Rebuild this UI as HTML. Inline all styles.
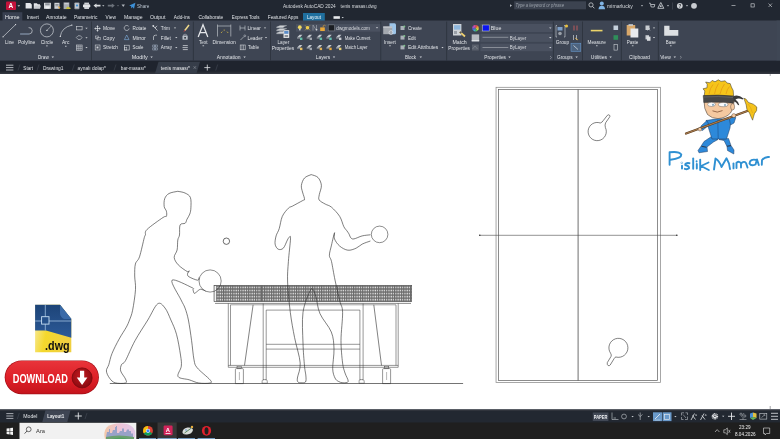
<!DOCTYPE html><html><head><meta charset="utf-8"><style>*{margin:0;padding:0}html,body{width:780px;height:439px;overflow:hidden;background:#fff}svg{display:block;will-change:transform}</style></head><body>
<svg width="780" height="439" viewBox="0 0 780 439" font-family="Liberation Sans">
<defs><pattern id="net" x="214" y="285.3" width="2.28" height="3.05" patternUnits="userSpaceOnUse"><rect width="2.28" height="3.05" fill="#e0e0e0"/><rect x="0" y="0" width="1.1" height="3.05" fill="#6a6a6a"/><rect x="0" y="0" width="2.28" height="1.3" fill="#6a6a6a"/></pattern><linearGradient id="btn" x1="0" y1="0" x2="0" y2="1"><stop offset="0" stop-color="#e8343a"/><stop offset="0.55" stop-color="#de1f27"/><stop offset="1" stop-color="#c5141c"/></linearGradient><radialGradient id="circ" cx="0.45" cy="0.4" r="0.6"><stop offset="0" stop-color="#c41a20"/><stop offset="1" stop-color="#8a0a10"/></radialGradient></defs>
<rect x="0" y="0" width="780" height="73.6" fill="#212731"/>
<rect x="6" y="1.6" width="10" height="8.4" rx="1" fill="#c3123b"/>
<text x="8.6" y="8.3" font-size="6.5" fill="#fff" font-weight="bold">A</text>
<path d="M17.45 5.19L20.15 5.19L18.80 6.68Z" fill="#c8ccd2"/>
<path d="M25.6 3H30.3L31.8 4.5V8.5H25.6Z" fill="#e4e6e9"/>
<path d="M33.8 3.2H36.8L37.8 4.2H40V8.5H33.8Z" fill="#e4e6e9"/><path d="M34.8 5.5H41L40 8.5H33.8Z" fill="#c9ccd0"/>
<rect x="44" y="2.8" width="6.899999999999999" height="6" fill="#d9dbde"/><rect x="45.2" y="3.3" width="4.499999999999998" height="2" fill="#8d939b"/><rect x="45.5" y="6.5" width="3.8999999999999986" height="2" fill="#eef0f2"/>
<rect x="54.4" y="2.8" width="5.100000000000001" height="6" fill="#d0d3d7"/><rect x="55.4" y="4" width="3.1000000000000014" height="0.7" fill="#6f757d"/><rect x="55.4" y="5.5" width="3.1000000000000014" height="0.7" fill="#6f757d"/><path d="M58.0 6L60.5 7.5L59.0 9Z" fill="#e0a33a"/>
<rect x="63.6" y="2.4" width="5.699999999999996" height="6.7" fill="#a8adb4"/><rect x="64.4" y="3.2" width="4.199999999999996" height="1" fill="#d0d4d8"/><path d="M65.6 9.1L67.6 6.5L70.8 8L70.3 9.1Z" fill="#c8c040"/>
<rect x="74.39999999999999" y="2.4" width="5.000000000000003" height="6.8" rx="0.8" fill="#9aa0a8"/><rect x="75.1" y="3.3" width="3.6000000000000028" height="4.6" fill="#c8ccd2"/><path d="M75.8 5.5L77.0 4L78.2 5.5L77.0 7Z" fill="#3d8fd4"/>
<rect x="83" y="4.2" width="7.299999999999997" height="3.3" rx="1.2" fill="#e2e4e7"/><rect x="84.3" y="2.6" width="4.6999999999999975" height="1.8" fill="#cfd2d6"/><rect x="84.3" y="7" width="4.6999999999999975" height="2" fill="#cfd2d6"/>
<path d="M93.5 5.6L96.5 3.4V4.8H100.5V6.6H96.5V8Z" fill="#d9dcdf"/>
<path d="M102.15 5.28L104.45 5.28L103.30 6.55Z" fill="#d0d4d9"/>
<path d="M114.8 5.6L111.8 3.4V4.8H107.8V6.6H111.8V8Z" fill="#6c727b"/>
<path d="M116.85 5.28L119.15 5.28L118.00 6.55Z" fill="#6c727b"/>
<path d="M121.5 4.4H125L123.25 7Z" fill="#aeb3ba"/>
<path d="M129.2 5.5L135.4 2.8L134 8.8L132.3 6.9L131 8.5L131.2 6.3Z" fill="#3c8fd6"/>
<text x="137.00" y="7.71" font-size="5.3" fill="#b9c4cf" font-weight="normal" font-style="normal" font-family="Liberation Sans" textLength="12.30" lengthAdjust="spacingAndGlyphs" >Share</text>
<text x="282.90" y="7.71" font-size="5.3" fill="#d8dbdf" font-weight="normal" font-style="normal" font-family="Liberation Sans" textLength="52.90" lengthAdjust="spacingAndGlyphs" >Autodesk AutoCAD 2024</text>
<text x="340.60" y="7.71" font-size="5.3" fill="#d8dbdf" font-weight="normal" font-style="normal" font-family="Liberation Sans" textLength="35.90" lengthAdjust="spacingAndGlyphs" >tenis masası.dwg</text>
<path d="M510 4.3L512 5.6L510 6.9Z" fill="#b6bbc2"/>
<rect x="514.2" y="1.3" width="71.8" height="8" fill="#3c4350"/>
<text x="515.50" y="7.16" font-size="4.6" fill="#9aa1aa" font-weight="normal" font-style="italic" font-family="Liberation Sans" textLength="48.50" lengthAdjust="spacingAndGlyphs" >Type a keyword or phrase</text>
<circle cx="591" cy="4.9" r="2.1" fill="none" stroke="#c5c9ce" stroke-width="0.8"/><path d="M592.5 6.4L594.4 8.3" stroke="#c5c9ce" stroke-width="0.9"/>
<circle cx="601.8" cy="3.6" r="2" fill="#80b4e4"/><path d="M598.5 9.2Q598.8 5.8 601.8 5.8Q604.8 5.8 605.1 9.2Z" fill="#80b4e4"/>
<text x="607.00" y="7.71" font-size="5.3" fill="#d8dbdf" font-weight="normal" font-style="normal" font-family="Liberation Sans" textLength="25.80" lengthAdjust="spacingAndGlyphs" >mimarlucky</text>
<path d="M640.85 5.28L643.15 5.28L642.00 6.55Z" fill="#d0d4d9"/>
<path d="M649 3.2H650.3L651.2 7H654.2L654.8 4.5H651" fill="none" stroke="#c5c9ce" stroke-width="0.8"/>
<path d="M660.8 2.5L663.8 8.3H657.8Z" fill="none" stroke="#c5c9ce" stroke-width="0.9"/><circle cx="660.8" cy="6.2" r="0.9" fill="#c5c9ce"/>
<path d="M666.85 5.28L669.15 5.28L668.00 6.55Z" fill="#d0d4d9"/>
<rect x="672" y="2.5" width="0.6" height="7" fill="#4a515b"/>
<circle cx="679.8" cy="5.8" r="2.9" fill="#d0d3d7"/><text x="678.4" y="7.8" font-size="4.5" fill="#1e2229" font-weight="bold">?</text>
<path d="M685.85 5.28L688.15 5.28L687.00 6.55Z" fill="#d0d4d9"/>
<circle cx="694" cy="5.8" r="2.9" fill="#c9ccd1"/>
<rect x="731.5" y="5.4" width="4" height="0.6" fill="#d9dcdf"/>
<rect x="751" y="3.8" width="3.2" height="3.2" fill="none" stroke="#d9dcdf" stroke-width="0.6"/>
<path d="M768.5 3.5L772 7M772 3.5L768.5 7" stroke="#d9dcdf" stroke-width="0.6"/>
<rect x="2.5" y="12.2" width="19.8" height="9" fill="#394050"/>
<rect x="303" y="13" width="21.8" height="8.2" fill="#1f6f9e"/>
<text x="5.00" y="19.01" font-size="5.3" fill="#eef0f2" font-weight="normal" font-style="normal" font-family="Liberation Sans" textLength="14.50" lengthAdjust="spacingAndGlyphs" >Home</text>
<text x="26.70" y="19.01" font-size="5.3" fill="#e0e3e7" font-weight="normal" font-style="normal" font-family="Liberation Sans" textLength="12.30" lengthAdjust="spacingAndGlyphs" >Insert</text>
<text x="46.00" y="19.01" font-size="5.3" fill="#e0e3e7" font-weight="normal" font-style="normal" font-family="Liberation Sans" textLength="20.70" lengthAdjust="spacingAndGlyphs" >Annotate</text>
<text x="74.00" y="19.01" font-size="5.3" fill="#e0e3e7" font-weight="normal" font-style="normal" font-family="Liberation Sans" textLength="23.40" lengthAdjust="spacingAndGlyphs" >Parametric</text>
<text x="105.60" y="19.01" font-size="5.3" fill="#e0e3e7" font-weight="normal" font-style="normal" font-family="Liberation Sans" textLength="10.30" lengthAdjust="spacingAndGlyphs" >View</text>
<text x="124.00" y="19.01" font-size="5.3" fill="#e0e3e7" font-weight="normal" font-style="normal" font-family="Liberation Sans" textLength="18.60" lengthAdjust="spacingAndGlyphs" >Manage</text>
<text x="149.90" y="19.01" font-size="5.3" fill="#e0e3e7" font-weight="normal" font-style="normal" font-family="Liberation Sans" textLength="15.50" lengthAdjust="spacingAndGlyphs" >Output</text>
<text x="173.80" y="19.01" font-size="5.3" fill="#e0e3e7" font-weight="normal" font-style="normal" font-family="Liberation Sans" textLength="16.20" lengthAdjust="spacingAndGlyphs" >Add-ins</text>
<text x="198.50" y="19.01" font-size="5.3" fill="#e0e3e7" font-weight="normal" font-style="normal" font-family="Liberation Sans" textLength="24.70" lengthAdjust="spacingAndGlyphs" >Collaborate</text>
<text x="231.70" y="19.01" font-size="5.3" fill="#e0e3e7" font-weight="normal" font-style="normal" font-family="Liberation Sans" textLength="27.90" lengthAdjust="spacingAndGlyphs" >Express Tools</text>
<text x="267.80" y="19.01" font-size="5.3" fill="#e0e3e7" font-weight="normal" font-style="normal" font-family="Liberation Sans" textLength="30.60" lengthAdjust="spacingAndGlyphs" >Featured Apps</text>
<text x="306.90" y="19.01" font-size="5.3" fill="#eef6fb" font-weight="normal" font-style="normal" font-family="Liberation Sans" textLength="14.10" lengthAdjust="spacingAndGlyphs" >Layout</text>
<rect x="333.5" y="16.2" width="6.4" height="2.6" fill="#e6e8eb"/>
<path d="M341.55 16.88L343.85 16.88L342.70 18.15Z" fill="#d0d4d9"/>
<rect x="0" y="20.5" width="780" height="40.3" fill="#3e4553"/>
<rect x="776.5" y="20.5" width="3.5" height="40.3" fill="#3f4755"/>
<rect x="91.00" y="21.5" width="0.8" height="39" fill="#2c323c"/>
<rect x="192.90" y="21.5" width="0.8" height="39" fill="#2c323c"/>
<rect x="270.10" y="21.5" width="0.8" height="39" fill="#2c323c"/>
<rect x="380.40" y="21.5" width="0.8" height="39" fill="#2c323c"/>
<rect x="446.30" y="21.5" width="0.8" height="39" fill="#2c323c"/>
<rect x="552.90" y="21.5" width="0.8" height="39" fill="#2c323c"/>
<rect x="582.10" y="21.5" width="0.8" height="39" fill="#2c323c"/>
<rect x="620.90" y="21.5" width="0.8" height="39" fill="#2c323c"/>
<rect x="657.90" y="21.5" width="0.8" height="39" fill="#2c323c"/>
<path d="M3 36.8L15.6 24.6" stroke="#cfd3d8" stroke-width="0.7"/><circle cx="3" cy="36.8" r="0.6" fill="#e8eaed"/><circle cx="15.6" cy="24.6" r="0.6" fill="#e8eaed"/>
<path d="M20.1 34H29.2" stroke="#9fb2cc" stroke-width="0.9"/><path d="M29.2 34A3.3 3.2 0 0 0 28.6 27.6" fill="none" stroke="#cfd3d8" stroke-width="0.7"/>
<circle cx="46.9" cy="30.4" r="6.5" fill="none" stroke="#cfd3d8" stroke-width="0.7"/><path d="M46.9 30.4L51.5 25.8" stroke="#cfd3d8" stroke-width="0.6"/><circle cx="46.9" cy="30.4" r="0.6" fill="#e8eaed"/>
<path d="M60.3 36.4Q61.5 27.5 71.9 25.1" fill="none" stroke="#cfd3d8" stroke-width="0.7"/><circle cx="60.3" cy="36.4" r="0.6" fill="#e8eaed"/><circle cx="71.9" cy="25.1" r="0.6" fill="#e8eaed"/>
<text x="4.90" y="44.11" font-size="5.3" fill="#e0e3e7" font-weight="normal" font-style="normal" font-family="Liberation Sans" textLength="9.10" lengthAdjust="spacingAndGlyphs" >Line</text>
<text x="18.00" y="44.11" font-size="5.3" fill="#e0e3e7" font-weight="normal" font-style="normal" font-family="Liberation Sans" textLength="17.30" lengthAdjust="spacingAndGlyphs" >Polyline</text>
<text x="40.80" y="44.11" font-size="5.3" fill="#e0e3e7" font-weight="normal" font-style="normal" font-family="Liberation Sans" textLength="12.40" lengthAdjust="spacingAndGlyphs" >Circle</text>
<text x="62.10" y="44.11" font-size="5.3" fill="#e0e3e7" font-weight="normal" font-style="normal" font-family="Liberation Sans" textLength="7.30" lengthAdjust="spacingAndGlyphs" >Arc</text>
<rect x="46.1" y="45.5" width="1.6" height="0.8" fill="#d8dbdf"/><rect x="65" y="45.8" width="1.6" height="0.8" fill="#d8dbdf"/>
<rect x="76.3" y="26.3" width="5.8" height="3.6" fill="none" stroke="#cfd3d8" stroke-width="0.6"/>
<path d="M76.3 37.5L78 35.8H80.5L82 37.5L80.5 39.4H78Z" fill="none" stroke="#cfd3d8" stroke-width="0.6"/>
<rect x="76.3" y="45" width="5.8" height="5.2" fill="none" stroke="#cfd3d8" stroke-width="0.6"/><path d="M76.3 46.7H82.1M76.3 48.4H82.1M78.2 45V50.2M80.1 45V50.2" stroke="#cfd3d8" stroke-width="0.5"/>
<path d="M85.35 27.78L87.65 27.78L86.50 29.05Z" fill="#d0d4d9"/>
<path d="M85.35 37.18L87.65 37.18L86.50 38.45Z" fill="#d0d4d9"/>
<path d="M85.35 46.88L87.65 46.88L86.50 48.15Z" fill="#d0d4d9"/>
<text x="38.00" y="59.01" font-size="5.3" fill="#e0e3e7" font-weight="normal" font-style="normal" font-family="Liberation Sans" textLength="10.70" lengthAdjust="spacingAndGlyphs" >Draw</text>
<path d="M51.58 56.55L54.02 56.55L52.80 57.89Z" fill="#d0d4d9"/>
<path d="M95.1 28.5H99.9M97.5 26.1V30.9" stroke="#e0e3e6" stroke-width="0.7"/><path d="M94.3 28.5L95.7 27.3V29.7ZM100.7 28.5L99.3 27.3V29.7ZM97.5 25.3L96.3 26.7H98.7ZM97.5 31.7L96.3 30.3H98.7Z" fill="#e0e3e6"/>
<rect x="95.3" y="36" width="3.2" height="2.6" fill="none" stroke="#cfd3d8" stroke-width="0.5"/><rect x="97" y="37.3" width="3.2" height="2.6" fill="none" stroke="#cfd3d8" stroke-width="0.5"/>
<rect x="95.2" y="45" width="4.8" height="5" fill="none" stroke="#cfd3d8" stroke-width="0.6"/><rect x="96.5" y="46.5" width="2" height="2" fill="#cfd3d8"/>
<text x="103.00" y="29.91" font-size="5.3" fill="#e0e3e7" font-weight="normal" font-style="normal" font-family="Liberation Sans" textLength="12.00" lengthAdjust="spacingAndGlyphs" >Move</text>
<text x="103.00" y="39.51" font-size="5.3" fill="#e0e3e7" font-weight="normal" font-style="normal" font-family="Liberation Sans" textLength="11.70" lengthAdjust="spacingAndGlyphs" >Copy</text>
<text x="103.00" y="49.31" font-size="5.3" fill="#e0e3e7" font-weight="normal" font-style="normal" font-family="Liberation Sans" textLength="15.00" lengthAdjust="spacingAndGlyphs" >Stretch</text>
<path d="M128.6 26.3A2.5 2.5 0 1 0 129.2 28.5" fill="none" stroke="#d0d4d9" stroke-width="0.7"/>
<path d="M126.7 35L129 39.6H124.4Z" fill="none" stroke="#7fb0e0" stroke-width="0.6"/>
<rect x="124.4" y="45.2" width="4.8" height="4.8" fill="none" stroke="#cfd3d8" stroke-width="0.6"/><rect x="124.4" y="47.5" width="2.4" height="2.5" fill="none" stroke="#cfd3d8" stroke-width="0.5"/>
<text x="132.50" y="29.91" font-size="5.3" fill="#e0e3e7" font-weight="normal" font-style="normal" font-family="Liberation Sans" textLength="13.80" lengthAdjust="spacingAndGlyphs" >Rotate</text>
<text x="132.50" y="39.51" font-size="5.3" fill="#e0e3e7" font-weight="normal" font-style="normal" font-family="Liberation Sans" textLength="13.30" lengthAdjust="spacingAndGlyphs" >Mirror</text>
<text x="132.50" y="49.31" font-size="5.3" fill="#e0e3e7" font-weight="normal" font-style="normal" font-family="Liberation Sans" textLength="10.80" lengthAdjust="spacingAndGlyphs" >Scale</text>
<path d="M153 25.8L157.5 30.5M157 25.8L155 28" stroke="#d8dbdf" stroke-width="0.8"/><circle cx="153.3" cy="26" r="0.9" fill="#d8dbdf"/>
<path d="M153.5 40V37Q153.5 35.2 155.5 35.2H157" fill="none" stroke="#d0d4d9" stroke-width="0.7"/>
<rect x="152.8" y="45" width="2" height="2" fill="none" stroke="#b9c8dc" stroke-width="0.45"/><rect x="155.6" y="45" width="2" height="2" fill="none" stroke="#b9c8dc" stroke-width="0.45"/><rect x="152.8" y="48" width="2" height="2" fill="none" stroke="#b9c8dc" stroke-width="0.45"/><rect x="155.6" y="48" width="2" height="2" fill="none" stroke="#b9c8dc" stroke-width="0.45"/>
<text x="160.80" y="29.91" font-size="5.3" fill="#e0e3e7" font-weight="normal" font-style="normal" font-family="Liberation Sans" textLength="9.20" lengthAdjust="spacingAndGlyphs" >Trim</text>
<text x="160.80" y="39.51" font-size="5.3" fill="#e0e3e7" font-weight="normal" font-style="normal" font-family="Liberation Sans" textLength="10.00" lengthAdjust="spacingAndGlyphs" >Fillet</text>
<text x="160.80" y="49.31" font-size="5.3" fill="#e0e3e7" font-weight="normal" font-style="normal" font-family="Liberation Sans" textLength="11.20" lengthAdjust="spacingAndGlyphs" >Array</text>
<path d="M173.85 27.48L176.15 27.48L175.00 28.75Z" fill="#d0d4d9"/>
<path d="M175.15 37.08L177.45 37.08L176.30 38.35Z" fill="#d0d4d9"/>
<path d="M175.15 46.88L177.45 46.88L176.30 48.15Z" fill="#d0d4d9"/>
<path d="M184.8 30.5L189 25" stroke="#eed88a" stroke-width="1.5"/><path d="M184 31.6L185.2 30" stroke="#c0404a" stroke-width="1"/>
<rect x="182.5" y="35.6" width="5.2" height="4.2" rx="0.5" fill="#b8bec6"/><rect x="184.3" y="37" width="1.6" height="1.6" fill="#2a3038"/><path d="M183.5 35.6V34.8Q185.1 33.5 186.7 34.8V35.6" fill="none" stroke="#b8bec6" stroke-width="0.6"/>
<path d="M182.8 45.6H187.8M182.5 47.6H187.8M182.8 49.6H187.8" stroke="#cfd3d8" stroke-width="0.8"/>
<text x="131.70" y="59.01" font-size="5.3" fill="#e0e3e7" font-weight="normal" font-style="normal" font-family="Liberation Sans" textLength="16.10" lengthAdjust="spacingAndGlyphs" >Modify</text>
<path d="M150.38 56.55L152.81 56.55L151.60 57.89Z" fill="#d0d4d9"/>
<path d="M198.2 36.9L203 24.8L207.8 36.9M199.9 32.6H206.1" fill="none" stroke="#e4e6e9" stroke-width="1.25"/>
<text x="199.00" y="43.61" font-size="5.3" fill="#e0e3e7" font-weight="normal" font-style="normal" font-family="Liberation Sans" textLength="8.50" lengthAdjust="spacingAndGlyphs" >Text</text>
<rect x="202.5" y="45.4" width="1.6" height="0.8" fill="#d8dbdf"/>
<path d="M217.5 24.5V36.5M230.8 24.5V36.5M217.5 26H230.8" stroke="#cfd3d8" stroke-width="0.6"/><path d="M221 33L222.3 31.6M224.2 30.8V29.5M227 31.6L228.2 33" stroke="#e6c542" stroke-width="0.7"/>
<text x="212.50" y="43.61" font-size="5.3" fill="#e0e3e7" font-weight="normal" font-style="normal" font-family="Liberation Sans" textLength="23.30" lengthAdjust="spacingAndGlyphs" >Dimension</text>
<text x="216.70" y="59.01" font-size="5.3" fill="#e0e3e7" font-weight="normal" font-style="normal" font-family="Liberation Sans" textLength="23.90" lengthAdjust="spacingAndGlyphs" >Annotation</text>
<path d="M243.38 56.55L245.81 56.55L244.60 57.89Z" fill="#d0d4d9"/>
<path d="M240 25.5V30.5M245 25.5V30.5M240 28H245" stroke="#cfd3d8" stroke-width="0.6"/>
<path d="M240.5 40L244 36.5" stroke="#cfd3d8" stroke-width="0.6"/><circle cx="244.8" cy="35.8" r="0.9" fill="none" stroke="#cfd3d8" stroke-width="0.5"/>
<rect x="240.2" y="45" width="5" height="4.8" fill="none" stroke="#cfd3d8" stroke-width="0.6"/><path d="M241.9 45V49.8M243.5 45V49.8" stroke="#cfd3d8" stroke-width="0.5"/>
<text x="247.50" y="29.91" font-size="5.3" fill="#e0e3e7" font-weight="normal" font-style="normal" font-family="Liberation Sans" textLength="13.30" lengthAdjust="spacingAndGlyphs" >Linear</text>
<text x="247.50" y="39.51" font-size="5.3" fill="#e0e3e7" font-weight="normal" font-style="normal" font-family="Liberation Sans" textLength="15.00" lengthAdjust="spacingAndGlyphs" >Leader</text>
<text x="248.00" y="49.31" font-size="5.3" fill="#e0e3e7" font-weight="normal" font-style="normal" font-family="Liberation Sans" textLength="11.00" lengthAdjust="spacingAndGlyphs" >Table</text>
<path d="M263.85 27.48L266.15 27.48L265.00 28.75Z" fill="#d0d4d9"/>
<path d="M264.85 37.08L267.15 37.08L266.00 38.35Z" fill="#d0d4d9"/>
<path d="M276.5 27.1L280 25.5H287L283.5 27.1Z" fill="#d5d8dc" stroke="#9aa0a8" stroke-width="0.3"/><path d="M276.5 27.1H283.5V28.1H276.5Z" fill="#b0b5bc"/>
<path d="M276.5 30.1L280 28.5H287L283.5 30.1Z" fill="#d5d8dc" stroke="#9aa0a8" stroke-width="0.3"/><path d="M276.5 30.1H283.5V31.1H276.5Z" fill="#b0b5bc"/>
<path d="M276.5 33.1L280 31.5H287L283.5 33.1Z" fill="#d5d8dc" stroke="#9aa0a8" stroke-width="0.3"/><path d="M276.5 33.1H283.5V34.1H276.5Z" fill="#b0b5bc"/>
<rect x="283.5" y="30.2" width="5.7" height="7.7" fill="#e8eaed"/><rect x="284.2" y="31" width="4.3" height="2.8" fill="#5a8cc8"/><rect x="284.6" y="35" width="3.5" height="2" fill="#8a9098"/>
<text x="277.50" y="43.61" font-size="5.3" fill="#e0e3e7" font-weight="normal" font-style="normal" font-family="Liberation Sans" textLength="11.70" lengthAdjust="spacingAndGlyphs" >Layer</text>
<text x="271.70" y="49.51" font-size="5.3" fill="#e0e3e7" font-weight="normal" font-style="normal" font-family="Liberation Sans" textLength="22.50" lengthAdjust="spacingAndGlyphs" >Properties</text>
<rect x="296" y="24.1" width="84.3" height="7.6" fill="#4a5160"/>
<circle cx="299.8" cy="27.2" r="1.9" fill="#f0d860"/><rect x="299" y="28.8" width="1.6" height="1.6" fill="#c8ccd2"/>
<circle cx="307.5" cy="27.8" r="1.8" fill="#f0d050"/><path d="M305 25.3L310 30.3M310 25.3L305 30.3" stroke="#e8c040" stroke-width="0.5"/>
<path d="M313 25V30.5M316.5 25V30.5M313 25L316.5 30.5" stroke="#a8aeb6" stroke-width="0.6"/><rect x="315.8" y="29" width="1.5" height="1.3" fill="#d0d4d8"/>
<rect x="320.2" y="27.4" width="4.6" height="3.6" fill="#e8a838"/><path d="M323.2 27.4V25.8Q324.4 24.6 325.6 25.8" fill="none" stroke="#e8a838" stroke-width="0.6"/>
<rect x="328.2" y="24.9" width="6.2" height="6" fill="#1a1d22" stroke="#8e949c" stroke-width="0.45"/>
<text x="336.30" y="29.91" font-size="5.3" fill="#d8dbdf" font-weight="normal" font-style="normal" font-family="Liberation Sans" textLength="33.70" lengthAdjust="spacingAndGlyphs" >dwgmodels.com</text>
<path d="M375.79 27.15L378.21 27.15L377.00 28.49Z" fill="#d0d4d9"/>
<path d="M297.0 37.6L299.6 34.8H302.4L300.0 37.6Z" fill="#c3c7cd"/><path d="M297.0 37.6H300.0V38.6H297.0Z" fill="#8d939b"/>
<rect x="300.0" y="37.6" width="2.4" height="2.4" fill="#60c0a8"/>
<path d="M306.6 37.6L309.2 34.8H312.0L309.6 37.6Z" fill="#c3c7cd"/><path d="M306.6 37.6H309.6V38.6H306.6Z" fill="#8d939b"/>
<rect x="309.6" y="37.6" width="2.4" height="2.4" fill="#a0a6ae"/>
<path d="M316.7 37.6L319.3 34.8H322.1L319.7 37.6Z" fill="#c3c7cd"/><path d="M316.7 37.6H319.7V38.6H316.7Z" fill="#8d939b"/>
<rect x="319.7" y="37.6" width="2.4" height="2.4" fill="#60c0a8"/>
<path d="M326.3 37.6L328.9 34.8H331.7L329.3 37.6Z" fill="#c3c7cd"/><path d="M326.3 37.6H329.3V38.6H326.3Z" fill="#8d939b"/>
<rect x="329.3" y="37.6" width="2.4" height="2.4" fill="#60c0b0"/>
<path d="M336.0 37.6L338.6 34.8H341.4L339.0 37.6Z" fill="#c3c7cd"/><path d="M336.0 37.6H339.0V38.6H336.0Z" fill="#8d939b"/>
<rect x="339.0" y="37.6" width="2.4" height="2.4" fill="#c8ccd2"/>
<path d="M297.0 47.7L299.6 44.9H302.4L300.0 47.7Z" fill="#c3c7cd"/><path d="M297.0 47.7H300.0V48.7H297.0Z" fill="#8d939b"/>
<rect x="300.0" y="47.7" width="2.4" height="2.4" fill="#e8c060"/>
<path d="M306.6 47.7L309.2 44.9H312.0L309.6 47.7Z" fill="#c3c7cd"/><path d="M306.6 47.7H309.6V48.7H306.6Z" fill="#8d939b"/>
<rect x="309.6" y="47.7" width="2.4" height="2.4" fill="#a0a6ae"/>
<path d="M316.7 47.7L319.3 44.9H322.1L319.7 47.7Z" fill="#c3c7cd"/><path d="M316.7 47.7H319.7V48.7H316.7Z" fill="#8d939b"/>
<rect x="319.7" y="47.7" width="2.4" height="2.4" fill="#e0b050"/>
<path d="M326.3 47.7L328.9 44.9H331.7L329.3 47.7Z" fill="#c3c7cd"/><path d="M326.3 47.7H329.3V48.7H326.3Z" fill="#8d939b"/>
<rect x="329.3" y="47.7" width="2.4" height="2.4" fill="#e8a838"/>
<path d="M336.0 47.7L338.6 44.9H341.4L339.0 47.7Z" fill="#c3c7cd"/><path d="M336.0 47.7H339.0V48.7H336.0Z" fill="#8d939b"/>
<rect x="339.0" y="47.7" width="2.4" height="2.4" fill="#e8d070"/>
<text x="344.70" y="39.51" font-size="5.3" fill="#e0e3e7" font-weight="normal" font-style="normal" font-family="Liberation Sans" textLength="25.80" lengthAdjust="spacingAndGlyphs" >Make Current</text>
<text x="344.70" y="49.31" font-size="5.3" fill="#e0e3e7" font-weight="normal" font-style="normal" font-family="Liberation Sans" textLength="22.80" lengthAdjust="spacingAndGlyphs" >Match Layer</text>
<text x="315.80" y="59.01" font-size="5.3" fill="#e0e3e7" font-weight="normal" font-style="normal" font-family="Liberation Sans" textLength="14.40" lengthAdjust="spacingAndGlyphs" >Layers</text>
<path d="M332.79 56.55L335.21 56.55L334.00 57.89Z" fill="#d0d4d9"/>
<path d="M389.5 23.3H394.5Q396 23.3 396 25V33Q396 34.2 394.5 34.2H389.5Z" fill="#9cc4e8"/><rect x="383.2" y="26.5" width="9" height="7.7" fill="#a4a9b0"/><rect x="383.2" y="26.5" width="9" height="1.2" fill="#c8ccd2"/><circle cx="391" cy="32.5" r="2" fill="none" stroke="#e4e6e9" stroke-width="0.6"/>
<text x="384.00" y="43.61" font-size="5.3" fill="#e0e3e7" font-weight="normal" font-style="normal" font-family="Liberation Sans" textLength="11.80" lengthAdjust="spacingAndGlyphs" >Insert</text>
<rect x="389.2" y="45.4" width="1.6" height="0.8" fill="#d8dbdf"/>
<rect x="400.5" y="26.0" width="4" height="4" fill="#aab0b8"/><circle cx="404.3" cy="26.4" r="1" fill="#7ec08a"/>
<rect x="400.5" y="35.6" width="4" height="4" fill="#aab0b8"/><circle cx="404.3" cy="36.0" r="1" fill="#7ec08a"/>
<rect x="400.5" y="45.4" width="4" height="4" fill="#aab0b8"/><circle cx="404.3" cy="45.8" r="1" fill="#7ec08a"/>
<text x="408.00" y="29.91" font-size="5.3" fill="#e0e3e7" font-weight="normal" font-style="normal" font-family="Liberation Sans" textLength="13.70" lengthAdjust="spacingAndGlyphs" >Create</text>
<text x="408.00" y="39.51" font-size="5.3" fill="#e0e3e7" font-weight="normal" font-style="normal" font-family="Liberation Sans" textLength="7.80" lengthAdjust="spacingAndGlyphs" >Edit</text>
<text x="408.00" y="49.31" font-size="5.3" fill="#e0e3e7" font-weight="normal" font-style="normal" font-family="Liberation Sans" textLength="30.30" lengthAdjust="spacingAndGlyphs" >Edit Attributes</text>
<path d="M441.35 46.88L443.65 46.88L442.50 48.15Z" fill="#d0d4d9"/>
<text x="405.00" y="59.01" font-size="5.3" fill="#e0e3e7" font-weight="normal" font-style="normal" font-family="Liberation Sans" textLength="11.00" lengthAdjust="spacingAndGlyphs" >Block</text>
<path d="M419.59 56.55L422.01 56.55L420.80 57.89Z" fill="#d0d4d9"/>
<rect x="453" y="24" width="8.4" height="11.5" fill="#d0d4d8"/><rect x="454" y="25.2" width="6.4" height="4.4" fill="#8fb8df"/><rect x="454" y="31" width="3" height="3" fill="#9aa0a8"/><path d="M459.8 31.8L465 36.5" stroke="#eed070" stroke-width="1.8"/><path d="M459.8 31.8L461.3 33.2" stroke="#555" stroke-width="1.8"/>
<text x="452.50" y="43.61" font-size="5.3" fill="#e0e3e7" font-weight="normal" font-style="normal" font-family="Liberation Sans" textLength="14.20" lengthAdjust="spacingAndGlyphs" >Match</text>
<text x="448.30" y="49.51" font-size="5.3" fill="#e0e3e7" font-weight="normal" font-style="normal" font-family="Liberation Sans" textLength="21.70" lengthAdjust="spacingAndGlyphs" >Properties</text>
<path d="M475.5 28.2L475.50 24.90A3.3 3.3 0 0 1 477.83 25.87Z" fill="#e84a4a"/><path d="M475.5 28.2L477.83 25.87A3.3 3.3 0 0 1 478.80 28.20Z" fill="#f0a030"/><path d="M475.5 28.2L478.80 28.20A3.3 3.3 0 0 1 477.83 30.53Z" fill="#f0e040"/><path d="M475.5 28.2L477.83 30.53A3.3 3.3 0 0 1 475.50 31.50Z" fill="#60c050"/><path d="M475.5 28.2L475.50 31.50A3.3 3.3 0 0 1 473.17 30.53Z" fill="#40b0c0"/><path d="M475.5 28.2L473.17 30.53A3.3 3.3 0 0 1 472.20 28.20Z" fill="#4a70e0"/><path d="M475.5 28.2L472.20 28.20A3.3 3.3 0 0 1 473.17 25.87Z" fill="#a050d0"/><path d="M475.5 28.2L473.17 25.87A3.3 3.3 0 0 1 475.50 24.90Z" fill="#e050a0"/>
<rect x="471.7" y="34.4" width="7.5" height="6.9" fill="#b8bcc2"/><rect x="471.7" y="40.2" width="7.5" height="1.1" fill="#e8eaed"/><rect x="472" y="44.5" width="6.8" height="6" fill="#5a606c"/><path d="M472.5 49L475 46L477.5 49" fill="none" stroke="#8a9098" stroke-width="0.6"/>
<rect x="480.4" y="24" width="72.1" height="8.1" fill="#4a5160"/><rect x="480.4" y="33.8" width="72.1" height="8.1" fill="#4a5160"/><rect x="480.4" y="43.7" width="72.1" height="7.5" fill="#4a5160"/>
<rect x="482.5" y="25" width="6.7" height="6" fill="#0a14f0" stroke="#c8cdd4" stroke-width="0.5"/>
<text x="490.80" y="29.91" font-size="5.3" fill="#e0e3e6" font-weight="normal" font-style="normal" font-family="Liberation Sans" textLength="-485.50" lengthAdjust="spacingAndGlyphs" >Blue</text>
<path d="M482.5 37.3H508.3M482.5 47.5H508.3" stroke="#c6cacf" stroke-width="0.5"/>
<text x="509.70" y="39.51" font-size="5.3" fill="#d8dbdf" font-weight="normal" font-style="normal" font-family="Liberation Sans" textLength="16.60" lengthAdjust="spacingAndGlyphs" >ByLayer</text>
<text x="509.70" y="49.41" font-size="5.3" fill="#d8dbdf" font-weight="normal" font-style="normal" font-family="Liberation Sans" textLength="16.60" lengthAdjust="spacingAndGlyphs" >ByLayer</text>
<path d="M549.08 27.45L551.51 27.45L550.30 28.79Z" fill="#d0d4d9"/>
<path d="M549.08 37.05L551.51 37.05L550.30 38.39Z" fill="#d0d4d9"/>
<path d="M549.08 46.95L551.51 46.95L550.30 48.29Z" fill="#d0d4d9"/>
<text x="484.20" y="59.01" font-size="5.3" fill="#e0e3e7" font-weight="normal" font-style="normal" font-family="Liberation Sans" textLength="21.80" lengthAdjust="spacingAndGlyphs" >Properties</text>
<path d="M508.29 56.55L510.71 56.55L509.50 57.89Z" fill="#d0d4d9"/>
<path d="M550 56L551.5 57.5L550 59" fill="none" stroke="#aeb3ba" stroke-width="0.5"/>
<path d="M557 25.5H556V37H557M564 25.5H565V37H564" fill="none" stroke="#cfd3d8" stroke-width="0.6"/><rect x="557.5" y="27" width="5" height="3.5" fill="#7d9fc8"/><circle cx="560" cy="33.5" r="1.8" fill="#9aa0a8"/><circle cx="566.5" cy="26" r="1.6" fill="#e8c040"/>
<text x="555.80" y="43.61" font-size="5.3" fill="#e0e3e7" font-weight="normal" font-style="normal" font-family="Liberation Sans" textLength="13.40" lengthAdjust="spacingAndGlyphs" >Group</text>
<path d="M574 25.5V30.5M577 25.5V30.5" stroke="#d86060" stroke-width="0.8"/><path d="M573.5 35V40M576.5 35V40" stroke="#cfd3d8" stroke-width="0.7"/><path d="M575 38L578 40" stroke="#e0b040" stroke-width="0.8"/>
<rect x="571" y="43.2" width="9.8" height="8.3" fill="#4d6480" stroke="#6b9ed6" stroke-width="0.5"/><path d="M573.5 45.5L578 49.5" stroke="#e6e8eb" stroke-width="0.7"/>
<text x="557.00" y="59.01" font-size="5.3" fill="#e0e3e7" font-weight="normal" font-style="normal" font-family="Liberation Sans" textLength="15.50" lengthAdjust="spacingAndGlyphs" >Groups</text>
<path d="M575.38 56.55L577.82 56.55L576.60 57.89Z" fill="#d0d4d9"/>
<rect x="590.8" y="29.8" width="11.7" height="1.6" fill="#ecd46a"/>
<text x="587.50" y="43.61" font-size="5.3" fill="#e0e3e7" font-weight="normal" font-style="normal" font-family="Liberation Sans" textLength="18.30" lengthAdjust="spacingAndGlyphs" >Measure</text>
<rect x="596.0" y="45.4" width="1.6" height="0.8" fill="#d8dbdf"/>
<rect x="613.5" y="25.5" width="4.6" height="4.5" fill="#c5d0dc"/><rect x="613.5" y="35.2" width="4.6" height="4.6" fill="#2f8f5a"/><rect x="614" y="44.6" width="3.6" height="5.5" fill="none" stroke="#c9cdd2" stroke-width="0.6"/>
<text x="590.80" y="59.01" font-size="5.3" fill="#e0e3e7" font-weight="normal" font-style="normal" font-family="Liberation Sans" textLength="16.20" lengthAdjust="spacingAndGlyphs" >Utilities</text>
<path d="M609.38 56.55L611.82 56.55L610.60 57.89Z" fill="#d0d4d9"/>
<rect x="626.7" y="25" width="8.5" height="10.5" fill="#d9a86a"/><rect x="630.5" y="28.5" width="7.8" height="9" fill="#e8eaed"/><rect x="628.5" y="24.2" width="4.5" height="1.6" fill="#c9cdd2"/>
<text x="626.70" y="43.61" font-size="5.3" fill="#e0e3e7" font-weight="normal" font-style="normal" font-family="Liberation Sans" textLength="11.60" lengthAdjust="spacingAndGlyphs" >Paste</text>
<rect x="631.9" y="45.4" width="1.6" height="0.8" fill="#d8dbdf"/>
<rect x="645.5" y="25.5" width="4" height="4.5" fill="#c9cdd2"/><path d="M647.5 28L650 30.5M650 28L647.5 30.5" stroke="#c9cdd2" stroke-width="0.7"/>
<rect x="645.5" y="35.2" width="3.5" height="4.2" fill="#c9cdd2"/><rect x="647" y="36.6" width="3.5" height="4.2" fill="#dadde1"/>
<path d="M652.85 27.48L655.15 27.48L654.00 28.75Z" fill="#d0d4d9"/>
<path d="M652.85 37.08L655.15 37.08L654.00 38.35Z" fill="#d0d4d9"/>
<text x="629.00" y="59.01" font-size="5.3" fill="#e0e3e7" font-weight="normal" font-style="normal" font-family="Liberation Sans" textLength="21.00" lengthAdjust="spacingAndGlyphs" >Clipboard</text>
<path d="M664.2 25.8H669.5V30H678.3V35.8H664.2Z" fill="#dcdfe2"/>
<text x="665.80" y="43.61" font-size="5.3" fill="#e0e3e7" font-weight="normal" font-style="normal" font-family="Liberation Sans" textLength="10.00" lengthAdjust="spacingAndGlyphs" >Base</text>
<rect x="670.0" y="45.4" width="1.6" height="0.8" fill="#d8dbdf"/>
<text x="660.20" y="59.01" font-size="5.3" fill="#e0e3e7" font-weight="normal" font-style="normal" font-family="Liberation Sans" textLength="10.50" lengthAdjust="spacingAndGlyphs" >View</text>
<path d="M673.58 56.55L676.01 56.55L674.80 57.89Z" fill="#d0d4d9"/>
<path d="M680 56L681.5 57.3L680 58.6" fill="none" stroke="#aeb3ba" stroke-width="0.5"/>
<rect x="0" y="60.8" width="780" height="12.8" fill="#1f242e"/><rect x="0" y="71.6" width="780" height="2" fill="#2a2e36"/>
<path d="M6 65.2H13.4M6 67.6H13.4M6 70H13.4" stroke="#d8dbdf" stroke-width="0.8"/>
<path d="M155 73.6L158.5 61.8H200L196.5 73.6Z" fill="#363d49"/>
<path d="M18.0 70.5L20.0 64.5" stroke="#4a515c" stroke-width="0.5"/>
<path d="M37.0 70.5L39.0 64.5" stroke="#4a515c" stroke-width="0.5"/>
<path d="M72.3 70.5L74.3 64.5" stroke="#4a515c" stroke-width="0.5"/>
<path d="M114.0 70.5L116.0 64.5" stroke="#4a515c" stroke-width="0.5"/>
<path d="M215.7 70.5L217.7 64.5" stroke="#4a515c" stroke-width="0.5"/>
<text x="23.30" y="69.51" font-size="5.3" fill="#e0e3e7" font-weight="normal" font-style="normal" font-family="Liberation Sans" textLength="9.80" lengthAdjust="spacingAndGlyphs" >Start</text>
<text x="43.00" y="69.51" font-size="5.3" fill="#e0e3e7" font-weight="normal" font-style="normal" font-family="Liberation Sans" textLength="20.50" lengthAdjust="spacingAndGlyphs" >Drawing1</text>
<text x="77.60" y="69.51" font-size="5.3" fill="#e0e3e7" font-weight="normal" font-style="normal" font-family="Liberation Sans" textLength="28.20" lengthAdjust="spacingAndGlyphs" >aynalı dolap*</text>
<text x="120.80" y="69.51" font-size="5.3" fill="#e0e3e7" font-weight="normal" font-style="normal" font-family="Liberation Sans" textLength="25.00" lengthAdjust="spacingAndGlyphs" >bar-masası*</text>
<text x="160.80" y="69.51" font-size="5.3" fill="#f0f2f4" font-weight="normal" font-style="normal" font-family="Liberation Sans" textLength="29.20" lengthAdjust="spacingAndGlyphs" >tenis masası*</text>
<path d="M193.6 66.2L196 68.8M196 66.2L193.6 68.8" stroke="#9aa0a8" stroke-width="0.5"/>
<path d="M204.3 67.6H210.3M207.3 64.6V70.6" stroke="#e4e6e9" stroke-width="0.8"/>
<rect x="0" y="409" width="780" height="30" fill="#222831"/>
<rect x="0" y="409" width="780" height="1" fill="#5a5e66"/><rect x="0" y="410" width="780" height="1" fill="#30343c"/>
<path d="M6.3 413.6H13.4M6.3 416H13.4M6.3 418.4H13.4" stroke="#c8ccd2" stroke-width="0.8"/>
<path d="M42.3 422L45.5 410.3H70.5L67.3 422Z" fill="#3e4553"/>
<text x="23.30" y="417.87" font-size="5.2" fill="#e0e3e7" font-weight="normal" font-style="normal" font-family="Liberation Sans" textLength="14.10" lengthAdjust="spacingAndGlyphs" >Model</text>
<text x="47.20" y="417.87" font-size="5.2" fill="#f0f2f4" font-weight="bold" font-style="normal" font-family="Liberation Sans" textLength="17.00" lengthAdjust="spacingAndGlyphs" >Layout1</text>
<path d="M74.8 416H81.8M78.3 412.5V419.5" stroke="#e4e6e9" stroke-width="0.9"/>
<path d="M17.3 419L19.3 413" stroke="#4a515c" stroke-width="0.5"/>
<path d="M85.0 419L87.0 413" stroke="#4a515c" stroke-width="0.5"/>
<rect x="592.8" y="412.5" width="15.6" height="8.5" fill="#414855"/>
<text x="593.80" y="418.53" font-size="4.8" fill="#eef0f2" font-weight="bold" font-style="normal" font-family="Liberation Sans" textLength="13.60" lengthAdjust="spacingAndGlyphs" >PAPER</text>
<path d="M612 412.5V419.5H618.5M613.5 418H616" fill="none" stroke="#c8ccd2" stroke-width="0.6"/>
<circle cx="624" cy="416.5" r="2.4" fill="none" stroke="#c8ccd2" stroke-width="0.6"/>
<path d="M631.45 415.98L633.75 415.98L632.60 417.25Z" fill="#d0d4d9"/>
<path d="M640.2 412.5V420M638 414.5L640.2 416.5L642.5 414.5" fill="none" stroke="#c8ccd2" stroke-width="0.6"/>
<path d="M647.55 415.98L649.85 415.98L648.70 417.25Z" fill="#d0d4d9"/>
<rect x="653" y="412.3" width="9" height="8.8" fill="#6a9acb"/><path d="M655 419L660 414" stroke="#eef0f2" stroke-width="0.8"/><path d="M654.5 420H660.5" stroke="#eef0f2" stroke-width="0.5"/>
<rect x="662.6" y="412.3" width="8.9" height="8.8" fill="#6a9acb"/><rect x="664.6" y="414.3" width="5" height="5" fill="none" stroke="#eef0f2" stroke-width="0.6"/>
<path d="M674.25 415.98L676.55 415.98L675.40 417.25Z" fill="#d0d4d9"/>
<path d="M681.5 412.8H684M685.5 412.8H687.5V415M687.5 416.5V419.5H685M683.5 419.5H681.5V417M681.5 415.5V412.8" fill="none" stroke="#c8ccd2" stroke-width="0.55"/><path d="M683 414.5L686 418" stroke="#c8ccd2" stroke-width="0.5"/>
<path d="M691 420L694.5 413.5M692.5 415.5L695.5 419.5" stroke="#e0e3e6" stroke-width="0.8"/><text x="695.3" y="415.6" font-size="3" fill="#e0e3e6">a</text>
<path d="M700.5 420L704 413.5M702 415.5L705 419.5" stroke="#e0e3e6" stroke-width="0.8"/><text x="704.8" y="415.6" font-size="3" fill="#e0e3e6">a</text>
<circle cx="714.9" cy="416.3" r="2.6" fill="none" stroke="#e6e8eb" stroke-width="1.3" stroke-dasharray="0.9 0.5"/><circle cx="714.9" cy="416.3" r="1.9" fill="#e6e8eb"/><circle cx="714.9" cy="416.3" r="0.8" fill="#22272f"/>
<path d="M722.05 415.78L724.35 415.78L723.20 417.05Z" fill="#d0d4d9"/>
<path d="M728 416.3H735M731.5 412.6V420" stroke="#e6e8eb" stroke-width="0.9"/>
<circle cx="741" cy="414.2" r="1.1" fill="none" stroke="#c8ccd2" stroke-width="0.5"/><circle cx="744.8" cy="416" r="1.1" fill="none" stroke="#c8ccd2" stroke-width="0.5"/><path d="M744 413L741.5 417M739.5 419.5H746.5M743 417V419.5" stroke="#c8ccd2" stroke-width="0.5"/>
<path d="M750 413.5L753 412.5V417L750 418Z" fill="#4a90d8"/><path d="M753 412.5L756.5 413.5V418L753 417Z" fill="#e0c040"/><path d="M750 418L753 417L756.5 418L753 420Z" fill="#60b060"/>
<rect x="759.8" y="413.3" width="7" height="5.8" fill="none" stroke="#c8ccd2" stroke-width="0.6"/><path d="M761.5 417.5L764.8 414.8M763.5 414.8H764.8V416" fill="none" stroke="#c8ccd2" stroke-width="0.5"/>
<path d="M771 413.3H778M771 416.3H778M771 419.3H778" stroke="#d8dbdf" stroke-width="0.85"/>
<rect x="0" y="422.5" width="780" height="16.5" fill="#1f1f1f"/>
<path d="M6.6 428.6L9.6 428.2V431H6.6ZM10.2 428.1L13 427.7V431H10.2ZM6.6 431.6H9.6V434.4L6.6 434ZM10.2 431.6H13V434.9L10.2 434.5Z" fill="#f4f4f4"/>
<rect x="19.5" y="422.8" width="116.8" height="16.2" fill="#f1f1f1"/>
<circle cx="28.7" cy="429.3" r="2.4" fill="none" stroke="#333" stroke-width="0.7"/><path d="M27 431L24.6 433.6" stroke="#333" stroke-width="0.8"/>
<text x="36.10" y="433.29" font-size="5.8" fill="#333" font-weight="normal" font-style="normal" font-family="Liberation Sans" textLength="8.90" lengthAdjust="spacingAndGlyphs" >Ara</text>
<defs><linearGradient id="ill" x1="0" y1="0" x2="1" y2="0"><stop offset="0" stop-color="#f2c8a8"/><stop offset="0.5" stop-color="#ecc4d8"/><stop offset="1" stop-color="#e0c8e8"/></linearGradient></defs>
<path d="M105 439Q103 432 107 427Q114 422.5 124 423.5Q133 424.5 135 431Q136 436 134 439Z" fill="url(#ill)"/>
<path d="M106 437L107 432H109V429H110V433H112L113 430H115V427H116V426H117V433H119L120 431H122V428.5H124V432H126L127 429.5H129V431H131V433.5H133V437Z" fill="#98a2c8"/>
<path d="M106 437Q118 434 134 437V439H106Z" fill="#6aa070"/><path d="M112 439Q120 436 128 439Z" fill="#50a060"/>
<circle cx="148" cy="430.8" r="4.9" fill="#db4437"/><path d="M148 430.8L152.24 433.25A4.9 4.9 0 0 1 143.76 433.25Z" fill="#0f9d58"/><path d="M148 430.8L143.76 433.25A4.9 4.9 0 0 1 148 425.9Z" fill="#f4c20d"/><circle cx="148" cy="430.8" r="2.1" fill="#fff"/><circle cx="148" cy="430.8" r="1.6" fill="#4285f4"/>
<rect x="139" y="438.2" width="17" height="0.8" fill="#86b6e4"/>
<rect x="157.5" y="422.4" width="19.2" height="16.6" fill="#373737"/>
<rect x="163.6" y="425.6" width="9" height="9.6" rx="1.2" fill="#d0245a"/><text x="165.7" y="432.2" font-size="5.8" fill="#fff" font-weight="bold">A</text><rect x="165.5" y="433.2" width="5" height="0.8" fill="#fff"/>
<rect x="157.5" y="438.2" width="19.2" height="0.8" fill="#86b6e4"/>
<path d="M182.5 433Q182 428.5 187.5 427.5Q192.5 427 193 430Q192 434 187 434.5Q184 434.8 182.5 433Z" fill="#d8dcd8"/><path d="M184.5 433L191.5 428" stroke="#4a7a50" stroke-width="0.9"/><circle cx="192" cy="427" r="1.2" fill="#e8b040"/><circle cx="186" cy="430" r="0.8" fill="#6090d0"/>
<rect x="178" y="438.2" width="17" height="0.8" fill="#86b6e4"/>
<ellipse cx="206.5" cy="430.8" rx="4.6" ry="4.9" fill="#e0202c"/><ellipse cx="206.5" cy="430.8" rx="2" ry="3.6" fill="#202020"/>
<rect x="197.6" y="438.2" width="17.4" height="0.8" fill="#86b6e4"/>
<path d="M715 432L717.2 429.6L719.4 432" fill="none" stroke="#e6e6e6" stroke-width="0.6"/>
<path d="M723.8 429.8H725.3L727.3 428V434.6L725.3 432.8H723.8Z" fill="none" stroke="#e6e6e6" stroke-width="0.6"/><path d="M728.5 429.8L730.2 432.8M730.2 429.8L728.5 432.8" stroke="#e6e6e6" stroke-width="0.5"/>
<text x="739.00" y="428.91" font-size="5.3" fill="#f0f0f0" font-weight="normal" font-style="normal" font-family="Liberation Sans" textLength="11.50" lengthAdjust="spacingAndGlyphs" >23:29</text>
<text x="735.00" y="436.41" font-size="5.3" fill="#f0f0f0" font-weight="normal" font-style="normal" font-family="Liberation Sans" textLength="20.60" lengthAdjust="spacingAndGlyphs" >8.04.2026</text>
<path d="M763.5 428H769.7V433.5H766.5L765 435V433.5H763.5Z" fill="none" stroke="#e6e6e6" stroke-width="0.6"/>
<path d="M109.8 383.5H463.1" stroke="#505050" stroke-width="0.8"/>
<path d="M215 303.4H411" stroke="#2e2e2e" stroke-width="0.55"/>
<path d="M228.3 303.4V367.3M230.5 304.8V365.4M398.2 303.4V367.3M396 304.8V365.4" stroke="#2e2e2e" stroke-width="0.5"/>
<path d="M230.5 304.8H396" stroke="#2e2e2e" stroke-width="0.45"/>
<path d="M228.3 365.4H398.2M228.3 367.3H398.2" stroke="#2e2e2e" stroke-width="0.5"/>
<path d="M263.2 303.6V380.4M266.2 310.1V380.4M359.9 310.1V380.4M363.1 303.6V380.4" stroke="#2e2e2e" stroke-width="0.5"/>
<path d="M262 383.2Q261.8 380 263.2 379.6H266.2Q267.6 380 267.4 383.2Z" fill="none" stroke="#2e2e2e" stroke-width="0.45"/><path d="M359 383.2Q358.8 380 359.9 379.6H363.1Q364.5 380 364.3 383.2Z" fill="none" stroke="#2e2e2e" stroke-width="0.45"/>
<path d="M266.2 310.1H359.9M266.2 344.3H359.9M266.2 349.1H359.9" stroke="#2e2e2e" stroke-width="0.5"/>
<path d="M253.1 304.8L244.5 365.4M373.8 304.8L381.5 365.4" stroke="#2e2e2e" stroke-width="0.6"/>
<path d="M235.4 383.6V369.5Q235.4 368.6 236.5 368.6H242.3Q243.4 368.6 243.4 369.5V383.6Z" fill="none" stroke="#2e2e2e" stroke-width="0.5"/><rect x="237" y="366.8" width="4.6" height="1.8" fill="none" stroke="#2e2e2e" stroke-width="0.4"/><path d="M239.4 372V380" stroke="#2e2e2e" stroke-width="0.35"/>
<path d="M382.6 383.6V369.5Q382.6 368.6 383.7 368.6H389.5Q390.6 368.6 390.6 369.5V383.6Z" fill="none" stroke="#2e2e2e" stroke-width="0.5"/><rect x="384.2" y="366.8" width="4.6" height="1.8" fill="none" stroke="#2e2e2e" stroke-width="0.4"/><path d="M386.6 372V380" stroke="#2e2e2e" stroke-width="0.35"/>
<rect x="214" y="285.3" width="197.7" height="16.4" fill="url(#net)"/>
<rect x="214" y="285.3" width="197.7" height="16.4" fill="none" stroke="#505050" stroke-width="0.6"/>
<rect x="214.5" y="286" width="1.6" height="15.2" fill="#f4f4f4"/>
<path d="M177.80 191.30 C176.33 191.67 171.18 192.27 169.00 193.50 C166.82 194.73 165.50 196.52 164.70 198.70 C163.90 200.88 163.92 204.52 164.20 206.60 C164.48 208.68 166.03 209.58 166.40 211.20 C166.77 212.82 166.97 215.25 166.40 216.30 C165.83 217.35 166.22 215.32 163.00 217.50 C159.78 219.68 150.03 226.48 147.10 229.40 C144.17 232.32 145.87 233.63 145.40 235.00 C144.93 236.37 145.28 233.97 144.30 237.60 C143.32 241.23 140.98 252.40 139.50 256.80 C138.02 261.20 136.20 260.80 135.40 264.00 C134.60 267.20 134.68 271.73 134.70 276.00 C134.72 280.27 135.85 283.88 135.50 289.60 C135.15 295.32 133.60 305.23 132.60 310.30 C131.60 315.37 130.55 317.18 129.50 320.00 C128.45 322.82 128.03 324.02 126.30 327.20 C124.57 330.38 121.48 334.72 119.10 339.10 C116.72 343.48 113.72 349.25 112.00 353.50 C110.28 357.75 109.73 361.68 108.80 364.60 C107.87 367.52 106.27 368.73 106.40 371.00 C106.53 373.27 108.15 376.23 109.60 378.20 C111.05 380.17 112.45 382.00 115.10 382.80 C117.75 383.60 123.77 383.63 125.50 383.00 C127.23 382.37 126.30 381.00 125.50 379.00 C124.70 377.00 121.37 373.40 120.70 371.00 C120.03 368.60 120.70 366.33 121.50 364.60 C122.30 362.87 123.25 364.58 125.50 360.60 C127.75 356.62 131.28 347.47 135.00 340.70 C138.72 333.93 144.02 326.15 147.80 320.00 C151.58 313.85 154.83 305.80 157.70 303.80 C160.57 301.80 162.80 305.30 165.00 308.00 C167.20 310.70 168.98 315.62 170.90 320.00 C172.82 324.38 174.90 328.47 176.50 334.30 C178.10 340.13 179.70 349.68 180.50 355.00 C181.30 360.32 181.70 362.60 181.30 366.20 C180.90 369.80 176.78 374.33 178.10 376.60 C179.42 378.87 185.75 378.73 189.20 379.80 C192.65 380.87 195.33 382.47 198.80 383.00 C202.27 383.53 208.13 383.53 210.00 383.00 C211.87 382.47 212.13 382.33 210.00 379.80 C207.87 377.27 199.87 371.13 197.20 367.80 C194.53 364.47 194.93 364.32 194.00 359.80 C193.07 355.28 192.53 347.33 191.60 340.70 C190.67 334.07 189.50 325.45 188.40 320.00 C187.30 314.55 186.22 311.33 185.00 308.00 C183.78 304.67 183.27 304.63 181.10 300.00 C178.93 295.37 170.20 282.27 172.00 280.20 C173.80 278.13 188.40 285.98 191.90 287.60 C195.40 289.22 192.62 288.95 193.00 289.90 C193.38 290.85 193.63 292.93 194.20 293.30 C194.77 293.67 195.37 292.77 196.40 292.10 C197.43 291.43 198.87 289.48 200.40 289.30 C201.93 289.12 204.73 290.72 205.60 291.00" fill="none" stroke="#2e2e2e" stroke-width="0.62" stroke-linejoin="round"/>
<path d="M177.80 191.30 C179.00 191.58 182.90 191.97 185.00 193.00 C187.10 194.03 189.42 195.03 190.40 197.50 C191.38 199.97 191.00 205.05 190.90 207.80 C190.80 210.55 190.45 212.10 189.80 214.00 C189.15 215.90 187.77 217.67 187.00 219.20 C186.23 220.73 186.35 222.25 185.20 223.20 C184.05 224.15 181.05 222.93 180.10 224.90 C179.15 226.87 179.88 232.48 179.50 235.00 C179.12 237.52 178.20 237.50 177.80 240.00 C177.40 242.50 177.70 247.10 177.10 250.00 C176.50 252.90 174.02 254.93 174.20 257.40 C174.38 259.87 176.02 262.43 178.20 264.80 C180.38 267.17 185.47 270.60 187.30 271.60 C189.13 272.60 189.17 270.42 189.20 270.80 C189.23 271.18 187.53 272.90 187.50 273.90 C187.47 274.90 187.32 275.75 189.00 276.80 C190.68 277.85 195.95 280.08 197.60 280.20 C199.25 280.32 198.68 277.95 198.90 277.50" fill="none" stroke="#2e2e2e" stroke-width="0.62" stroke-linejoin="round"/>
<circle cx="210.1" cy="281" r="11.1" fill="none" stroke="#2e2e2e" stroke-width="0.55"/>
<circle cx="226.4" cy="241.2" r="3.2" fill="none" stroke="#2e2e2e" stroke-width="0.7"/>
<path d="M311.20 174.60 C310.08 175.17 306.13 176.20 304.50 178.00 C302.87 179.80 301.73 183.07 301.40 185.40 C301.07 187.73 302.07 190.12 302.50 192.00 C302.93 193.88 303.67 195.42 304.00 196.70 C304.33 197.98 304.70 199.07 304.50 199.70 C304.30 200.33 304.80 199.43 302.80 200.50 C300.80 201.57 294.90 204.82 292.50 206.10 C290.10 207.38 290.10 206.48 288.40 208.20 C286.70 209.92 283.83 212.98 282.30 216.40 C280.77 219.82 280.23 225.45 279.20 228.70 C278.17 231.95 276.78 233.33 276.10 235.90 C275.42 238.47 274.75 241.88 275.10 244.10 C275.45 246.32 276.83 248.52 278.20 249.20 C279.57 249.88 281.77 249.73 283.30 248.20 C284.83 246.67 286.37 241.88 287.40 240.00 C288.43 238.12 288.98 237.08 289.50 236.90 C290.02 236.72 290.68 234.80 290.50 238.90 C290.32 243.00 288.88 254.32 288.40 261.50 C287.92 268.68 287.28 273.53 287.60 282.00 C287.92 290.47 289.13 303.02 290.30 312.30 C291.47 321.58 292.95 329.25 294.60 337.70 C296.25 346.15 299.73 356.28 300.20 363.00 C300.67 369.72 297.77 374.83 297.40 378.00 C297.03 381.17 297.40 381.20 298.00 382.00 C298.60 382.80 299.75 382.80 301.00 382.80 C302.25 382.80 304.68 383.13 305.50 382.00 C306.32 380.87 306.07 378.67 305.90 376.00 C305.73 373.33 304.98 371.50 304.50 366.00 C304.02 360.50 303.25 351.95 303.00 343.00 C302.75 334.05 301.83 320.97 303.00 312.30 C304.17 303.63 308.33 294.77 310.00 291.00 C311.67 287.23 312.00 288.70 313.00 289.70 C314.00 290.70 314.83 293.00 316.00 297.00 C317.17 301.00 317.45 307.87 320.00 313.70 C322.55 319.53 328.97 326.12 331.30 332.00 C333.63 337.88 333.77 342.88 334.00 349.00 C334.23 355.12 332.53 363.87 332.70 368.70 C332.87 373.53 334.05 375.88 335.00 378.00 C335.95 380.12 337.07 380.60 338.40 381.40 C339.73 382.20 341.37 382.80 343.00 382.80 C344.63 382.80 347.87 383.03 348.20 381.40 C348.53 379.77 345.93 376.07 345.00 373.00 C344.07 369.93 343.27 368.42 342.60 363.00 C341.93 357.58 341.00 348.95 341.00 340.50 C341.00 332.05 342.80 318.88 342.60 312.30 C342.40 305.72 341.07 306.38 339.80 301.00 C338.53 295.62 336.38 286.58 335.00 280.00 C333.62 273.42 332.43 265.62 331.50 261.50 C330.57 257.38 329.40 258.03 329.40 255.30 C329.40 252.57 330.65 248.85 331.50 245.10 C332.35 241.35 334.00 233.83 334.50 232.80 C335.00 231.77 333.63 236.68 334.50 238.90 C335.37 241.12 337.47 244.22 339.70 246.10 C341.93 247.98 345.17 249.85 347.90 250.20 C350.63 250.55 353.72 249.22 356.10 248.20 C358.48 247.18 359.82 245.30 362.20 244.10 C364.58 242.90 369.03 241.52 370.40 241.00" fill="none" stroke="#2e2e2e" stroke-width="0.62" stroke-linejoin="round"/>
<path d="M311.20 174.60 C312.33 175.08 316.30 175.70 318.00 177.50 C319.70 179.30 321.18 182.55 321.40 185.40 C321.62 188.25 319.67 192.17 319.30 194.60 C318.93 197.03 318.20 198.42 319.20 200.00 C320.20 201.58 323.25 202.90 325.30 204.10 C327.35 205.30 329.10 205.15 331.50 207.20 C333.90 209.25 337.65 213.17 339.70 216.40 C341.75 219.63 342.62 224.22 343.80 226.60 C344.98 228.98 345.95 229.50 346.80 230.70 C347.65 231.90 348.22 232.60 348.90 233.80 C349.58 235.00 350.05 237.05 350.90 237.90 C351.75 238.75 352.12 239.23 354.00 238.90 C355.88 238.57 359.47 236.58 362.20 235.90 C364.93 235.22 369.03 234.98 370.40 234.80" fill="none" stroke="#2e2e2e" stroke-width="0.62" stroke-linejoin="round"/>
<circle cx="379.6" cy="234.4" r="8.3" fill="none" stroke="#2e2e2e" stroke-width="0.55"/>
<rect x="496.05" y="87.3" width="164.45" height="295.3" fill="none" stroke="#8a8a8a" stroke-width="0.75"/>
<rect x="498.4" y="89.6" width="159.2" height="290.9" fill="none" stroke="#5c5c5c" stroke-width="0.7"/>
<path d="M578.1 89.6V380.5" stroke="#4a4a4a" stroke-width="0.8"/>
<path d="M479.3 235.3H677.3" stroke="#4a4a4a" stroke-width="0.6"/><circle cx="479.8" cy="235.3" r="0.8" fill="#333"/><circle cx="676.8" cy="235.3" r="0.8" fill="#333"/>
<path d="M600.3 123Q602.4 122.3 603.3 120.5L607.3 115.4Q608.8 114 609.9 115.6Q610.1 116.5 609.5 117.2L605.6 122.8Q604.6 125 605.4 127.6A9.1 9.1 0 1 1 600.3 123Z" fill="none" stroke="#2e2e2e" stroke-width="0.6"/>
<path d="M610.6 353.25Q611.8 355 611 356.5L607.3 362.6Q606.8 364.6 608.2 365.6Q609.5 366 610.2 365L614.2 358.5Q614.8 357.2 615.9 357A9.5 9.5 0 1 0 610.6 353.25Z" fill="none" stroke="#2e2e2e" stroke-width="0.6"/>
<defs><linearGradient id="dwgy" x1="0" y1="0" x2="1" y2="0.3"><stop offset="0" stop-color="#f8eeb8"/><stop offset="0.45" stop-color="#f4d82c"/><stop offset="1" stop-color="#f0d040"/></linearGradient><linearGradient id="dwgb" x1="0" y1="0" x2="0" y2="1"><stop offset="0" stop-color="#1d4478"/><stop offset="1" stop-color="#2c5a98"/></linearGradient></defs>
<path d="M35.1 304.8H60L71.3 319V352.3H35.1Z" fill="url(#dwgy)"/>
<path d="M35.1 304.8H60L71.3 319V337.8L46 330.4H35.1Z" fill="url(#dwgb)"/>
<path d="M60 304.8L71.5 319H64Q60 317 60 313Z" fill="#3a6aa8"/>
<path d="M35.1 321H71.3M45.3 304.8V330.4" stroke="#a8c8e8" stroke-width="0.75"/>
<rect x="41.6" y="316.7" width="7.4" height="7.4" fill="#24508a" stroke="#c8e0f4" stroke-width="0.9"/>
<text x="45.1" y="349.8" font-size="12" font-weight="bold" fill="#111" textLength="24.5" lengthAdjust="spacingAndGlyphs">.dwg</text>
<rect x="4.7" y="360.4" width="94.2" height="33.9" rx="16.95" fill="#a40f16"/>
<rect x="5.4" y="361" width="92.8" height="32.6" rx="16.3" fill="url(#btn)"/>
<text x="12.8" y="382.6" font-size="12.1" font-weight="bold" fill="#fff" textLength="55.2" lengthAdjust="spacingAndGlyphs">DOWNLOAD</text>
<circle cx="82.1" cy="377.9" r="10" fill="url(#circ)" stroke="#7e0a0f" stroke-width="0.9"/>
<path d="M80 370.8H84.2V377.6H87.4L82.1 385L76.8 377.6H80Z" fill="#fff"/>
<path d="M711.5 136.5L704 141.5L700.8 146.5L698 150.5L699 152.8L707.5 151.5L707 147L713.5 142L718 139.5Z" fill="#2d89da" stroke="#1e3a60" stroke-width="0.5" stroke-linejoin="round"/>
<path d="M719 139.5L724 140.5L727 146.5L727.5 150.5L733.8 154L734 150L731 145.5L728.5 138.5Z" fill="#2d89da" stroke="#1e3a60" stroke-width="0.5" stroke-linejoin="round"/>
<path d="M701.5 146.2L706.5 147.3" stroke="#2a3a50" stroke-width="1.1"/><path d="M726.8 146.2L731 145.6" stroke="#2a3a50" stroke-width="1.1"/>
<path d="M706 120.5Q718 117.5 731 119.5L730 128L726.5 139L712 139L708.5 128Z" fill="#2d89da" stroke="#1e3a60" stroke-width="0.5" stroke-linejoin="round"/>
<path d="M717.8 120L718.2 139" stroke="#1c4f8a" stroke-width="0.6"/>
<path d="M707 120.5L701.5 125.5L699.5 129L702.5 130.5L709 125Z" fill="#2d89da" stroke="#1e3a60" stroke-width="0.5" stroke-linejoin="round"/>
<path d="M729.5 119.5L732.5 116.5L735.8 117.5L734 123L730.5 125Z" fill="#2d89da" stroke="#1e3a60" stroke-width="0.5" stroke-linejoin="round"/>
<path d="M686 133.5L750 110" stroke="#5a3a1a" stroke-width="2.2" stroke-linecap="round"/><path d="M686 133.5L750 110" stroke="#a87c50" stroke-width="1.3" stroke-linecap="round"/>
<circle cx="699.9" cy="129.2" r="1.8" fill="#f5c9a0" stroke="#333" stroke-width="0.4"/><circle cx="733.8" cy="115.6" r="2" fill="#f5c9a0" stroke="#333" stroke-width="0.4"/>
<path d="M743.8 98.2Q746 98 748.5 102.5Q754 103.5 756.8 107Q757.5 111 754.5 113.5Q753.5 117 752.6 120.2Q750.5 116 749.5 113Q746 110 746.2 105Z" fill="#f4c21c" stroke="#2a2a2a" stroke-width="0.45"/>
<path d="M748 104Q751 107 752.5 113" fill="none" stroke="#d89a10" stroke-width="0.5"/>
<path d="M704 100.5Q703.8 109 707.5 114.5Q712 118.8 718 118.6Q726 118 730.5 113Q734 108.5 734.2 101Z" fill="#f5c9a0" stroke="#2a2a2a" stroke-width="0.5"/>
<ellipse cx="732.6" cy="106.8" rx="2" ry="3.2" fill="#f5c9a0" stroke="#2a2a2a" stroke-width="0.4"/>
<path d="M704.2 96L704.8 91L703 88.8L707 87.8L707.2 84.3L705.6 82L709.8 82.8L712.2 80.4L715 81.8L718.3 79.8L721 81.4L725.2 80.8L727 83L730.2 83.6L731.4 87L733.2 90.5L733.6 96Z" fill="#f5c41a" stroke="#2a2a2a" stroke-width="0.5" stroke-linejoin="round"/>
<path d="M709 94Q710 88 713 84.5M714.5 94Q715.5 88 718.5 83.5M720 94Q721.5 88 724.5 84M726 94Q727 89 729.5 86.5" fill="none" stroke="#e39512" stroke-width="0.7"/>
<path d="M703.2 95.6Q718 94.2 733.6 96.2L733.4 103.2Q718 101.5 703.8 102.6Z" fill="#474747" stroke="#2a2a2a" stroke-width="0.45"/>
<path d="M704 97Q718 95.8 733 97.5" fill="none" stroke="#6a6a6a" stroke-width="0.7"/>
<path d="M733 96.5Q738 94 743.5 98.5L742.5 99.5Q738.5 97.5 735.5 99.5Q738.5 101.5 739.3 105.3L738 105Q736.5 102 733.3 101Z" fill="#3a3a3a"/>
<ellipse cx="711.5" cy="104.4" rx="3.9" ry="2.1" fill="#fafafa" stroke="#444" stroke-width="0.4"/><ellipse cx="723.2" cy="104.6" rx="4.8" ry="2.1" fill="#fafafa" stroke="#444" stroke-width="0.4"/>
<circle cx="713" cy="104.8" r="1.1" fill="#88aac0"/><circle cx="725" cy="105" r="1.1" fill="#88aac0"/>
<path d="M712.5 110.8Q717 113.5 722.5 110.6" fill="none" stroke="#5a2a10" stroke-width="0.6"/>
<g fill="none" stroke="#2f90d2" stroke-width="1.9" stroke-linecap="round" stroke-linejoin="round">
<path d="M669.6 164.7V152.3Q679 151 681.3 154.5Q681.5 158.5 670.5 159.7"/>
<path d="M682 165.8V168.6"/><circle cx="681.8" cy="162.8" r="0.2"/>
<path d="M689.5 163.2Q685 162.5 685.2 165Q689.5 166 689 168.3Q687 169.8 684.8 168.8"/>
<path d="M693.2 158.5V168.8"/>
<path d="M696.8 164V168.6M696.6 161.2V161.5"/>
<path d="M700.2 159.6V170M708.5 162.5L701 166L708.8 170"/>
<path d="M714 169.5L715.5 158.5Q719.5 161 721.5 167L726.5 158.3Q729.5 163 730 169"/>
<path d="M733.5 163.5V168.4"/>
<path d="M736.5 168V162.8Q739.5 160.5 741 163.5V167.5M741 163.5Q744 160.5 746 163L747.5 167.5"/>
<path d="M756.5 160Q750 158.5 749.5 163.5Q751 166.5 755.5 164.5L757 159.5L758.8 165"/>
<path d="M761.8 164.8L762 160Q765 156.5 769 157"/>
</g>
<path d="M770.2 406V409" stroke="#8a8a90" stroke-width="0.8"/><rect x="769.7" y="74.2" width="1" height="1.6" fill="#9a9ca0"/>
</svg></body></html>
